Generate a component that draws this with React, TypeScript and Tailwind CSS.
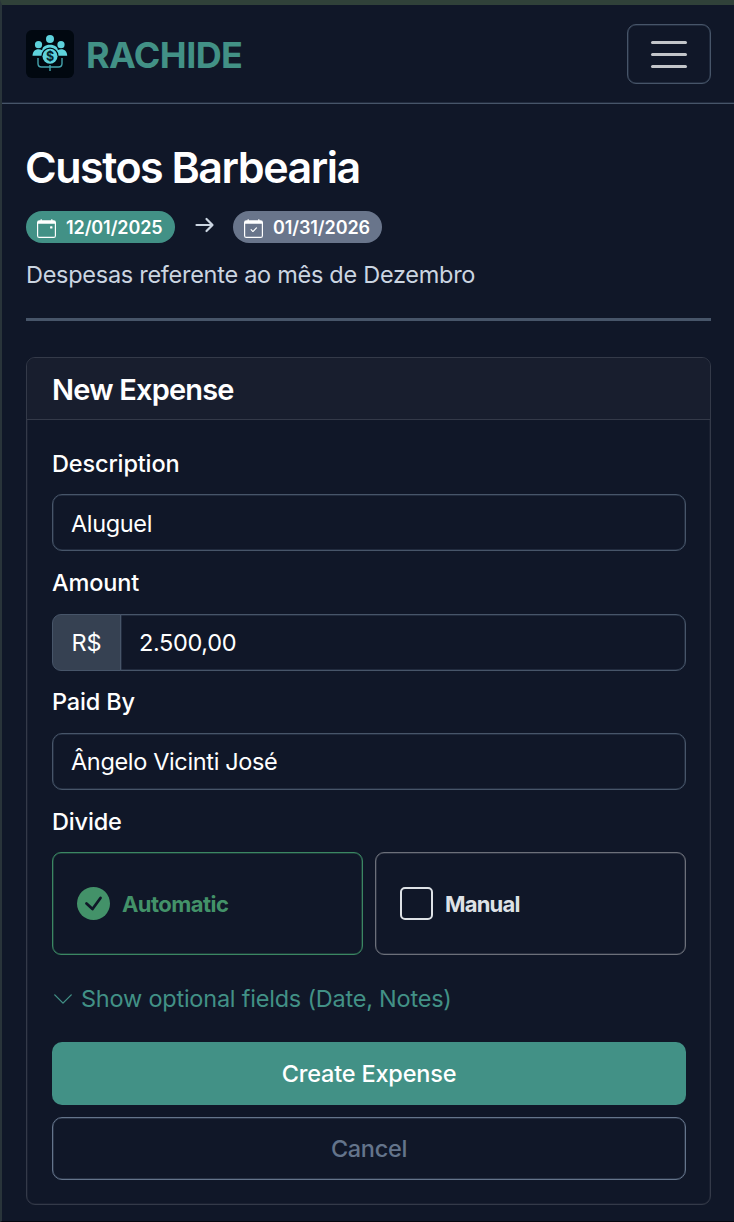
import { useState } from "react";
import { BsCalendarCheck, BsCalendarEvent, BsChevronDown } from "react-icons/bs";

const fieldClass =
  "h-[57px] w-full rounded-[10px] border border-[#475569] shadow-[inset_0_0_0_0.5px_#334155] bg-transparent px-[18px] text-[23.5px] tracking-[-0.35px] text-white outline-none";

function Logo() {
  return (
    <svg viewBox="0 0 48 48" className="size-12 rounded-md bg-[#010810]" fill="#5ed3dc">
      <circle cx="12.5" cy="14.7" r="3.6" />
      <circle cx="35" cy="14.7" r="3.6" />
      <circle cx="24" cy="9" r="4" />
      <path d="M6.5 25.800c0-4 2.300-6.600 6-6.600 2.600 0 4.200 1 5.200 2.800l-1.200 3.800z" />
      <path d="M41.200 25.800c0-4-2.300-6.600-6-6.600-2.600 0-4.200 1-5.200 2.800l1.200 3.800z" />
      <path d="M16 21c0-4 3-6.300 8-6.300s8 2.300 8 6.300v2H16z" />
      <circle cx="24" cy="26.200" r="8.600" fill="#010810" />
      <circle cx="24" cy="26.200" r="7.500" />
      <text x="24" y="30.600" textAnchor="middle" fontSize="12.500" fontWeight="700" fontFamily="Inter, sans-serif" fill="#06242c">$</text>
      <path d="M12 28v5.500q0 3.500 3.500 3.500h17q3.500 0 3.500-3.500V28M24 35v6" fill="none" stroke="#45a4ad" strokeWidth="1.400" />
    </svg>
  );
}

function Label({ children }: { children: string }) {
  return (
    <label className="block h-[30px] text-[23.5px] leading-[30px] font-medium tracking-[-0.15px]">
      {children}
    </label>
  );
}

export default function App() {
  const [mode, setMode] = useState("automatic");

  return (
    <div className="h-[1222px] overflow-hidden border-t-[5px] border-b border-l-2 border-t-[#304139] border-b-[#05060f] border-l-[#29343a] bg-[#101728] font-['Inter',sans-serif] text-white">
      {/* Navbar */}
      <header className="flex h-[99px] items-center justify-between border-b border-[#475569] pr-[23px] pl-6 shadow-[inset_0_-0.5px_0_#334155]">
        <div className="flex items-center gap-3">
          <Logo />
          <span className="pt-[2px] text-[36px] leading-none font-bold tracking-[-0.6px] text-[#429186]">RACHIDE</span>
        </div>
        <button className="flex h-[60px] w-[84px] flex-col items-center justify-center gap-[9px] rounded-[9px] border border-[#475569] shadow-[inset_0_0_0_0.5px_#334155]">
          <span className="h-[3px] w-9 rounded-full bg-[#c3c5c9]" />
          <span className="h-[3px] w-9 rounded-full bg-[#c3c5c9]" />
          <span className="h-[3px] w-9 rounded-full bg-[#c3c5c9]" />
        </button>
      </header>

      <main className="pr-[23px] pl-6">
        <h1 className="-ml-px mt-[37px] h-[53px] text-[43px] leading-[53px] font-semibold tracking-[-1.5px]">
          Custos Barbearia
        </h1>
        <div className="mt-[17px] flex h-8 items-center">
          <span className="flex h-8 w-[149px] items-center rounded-full bg-[#429186] pl-[11px] text-[18px] font-semibold tracking-[-0.1px]">
            <BsCalendarEvent className="mt-0.5 mr-[10px] size-[19px]" />
            12/01/2025
          </span>
          <svg viewBox="0 0 20 16" className="mr-[18px] mb-[5px] ml-[20px] h-4 w-5" fill="none" stroke="#cbd5e1" strokeWidth="2.200" strokeLinecap="round" strokeLinejoin="round">
            <path d="M1.500 8h15.500M11.500 2l6 6-6 6" />
          </svg>
          <span className="flex h-8 w-[149px] items-center rounded-full bg-[#69758b] pl-[11px] text-[18px] font-semibold tracking-[-0.1px]">
            <BsCalendarCheck className="mt-0.5 mr-[10px] size-[19px]" />
            01/31/2026
          </span>
        </div>
        <p className="mt-4 h-8 text-[23.5px] leading-8 tracking-[-0.28px] text-[#cbd5e1]">
          Despesas referente ao mês de Dezembro
        </p>
        <hr className="mt-[27px] border-t-[3px] border-[#475569]" />

        {/* Expense form */}
        <section className="mt-9 h-[848px] rounded-[9px] border border-[#343a49] shadow-[inset_0_0_0_0.5px_#252b3a]">
          <h2 className="h-[62px] rounded-t-[8px] border-b border-[#343a49] bg-[#181e2e] pl-[25px] text-[29px] leading-[63px] font-semibold tracking-[-0.8px]">
            New Expense
          </h2>
          <div className="pr-6 pl-[25px] pt-[29px]">
            <Label>Description</Label>
            <input className={`${fieldClass} mt-[15px] pt-px`} defaultValue="Aluguel" />

            <div className="mt-[17px]">
              <Label>Amount</Label>
            </div>
            <div className="mt-4 flex">
              <span className="flex h-[57px] w-[69px] shrink-0 items-center justify-center rounded-l-[9px] border border-[#475569] bg-[#364152] text-[23.5px]">
                R$
              </span>
              <input className={`${fieldClass} -ml-px rounded-l-none`} defaultValue="2.500,00" />
            </div>

            <div className="mt-4">
              <Label>Paid By</Label>
            </div>
            <input className={`${fieldClass} mt-4`} defaultValue="Ângelo Vicinti José" />

            <div className="mt-[17px]">
              <Label>Divide</Label>
            </div>
            <div className="mt-[15px] grid grid-cols-2 gap-3">
              <button
                onClick={() => setMode("automatic")}
                className="flex h-[103px] items-center rounded-[9px] border border-[#3b8763] pl-6 text-[22px] font-bold tracking-[-0.55px] text-[#439269] shadow-[inset_0_0_0_0.5px_#2a5f4b]"
              >
                <svg viewBox="0 0 33 33" className="mr-3 size-[33px]">
                  <circle cx="16.500" cy="16.500" r="16.500" fill="#439269" />
                  {mode === "automatic" && (
                    <path d="M9.500 16.500l6 5.500 8-11" fill="none" stroke="#101728" strokeWidth="2.800" strokeLinecap="round" strokeLinejoin="round" />
                  )}
                </svg>
                <span className="pt-px">Automatic</span>
              </button>
              <button
                onClick={() => setMode("manual")}
                className="flex h-[103px] items-center rounded-[9px] border border-[#6c707a] pl-6 text-[22px] font-bold tracking-[-0.8px] text-[#dee2e6] shadow-[inset_0_0_0_0.5px_#454b58]"
              >
                <span className="mr-3 size-[33px] rounded-[5px] border-2 border-[#dee2e6]" />
                <span className="pt-px">Manual</span>
              </button>
            </div>

            <button className="mt-7 flex h-8 items-center gap-[7px] text-[23.5px] tracking-[-0.22px] text-[#429186]">
              <BsChevronDown className="size-[22px]" />
              Show optional fields (Date, Notes)
            </button>

            <button className="mt-[27px] block h-[63px] w-full rounded-[10px] bg-[#429186] text-[23.5px] font-medium tracking-[-0.2px]">
              Create Expense
            </button>
            <button className="mt-3 block h-[63px] w-full rounded-[10px] border border-[#64748b] text-[23.5px] font-medium tracking-[-0.3px] text-[#64748b] shadow-[inset_0_0_0_0.5px_#3f4c60]">
              Cancel
            </button>
          </div>
        </section>
      </main>
    </div>
  );
}
